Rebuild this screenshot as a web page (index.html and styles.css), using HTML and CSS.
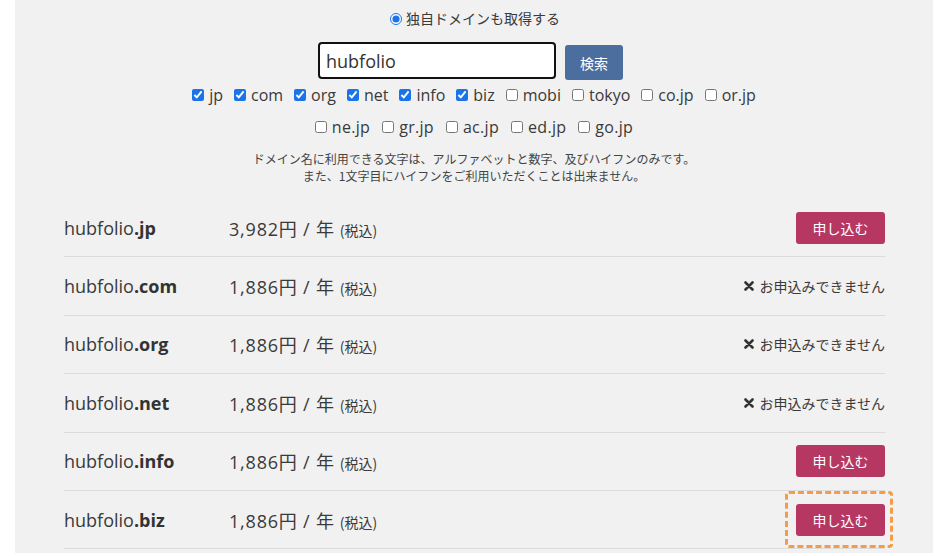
FILE: index.html
```html
<!DOCTYPE html>
<html lang="ja">
<head>
<meta charset="utf-8">
<title>ドメイン検索</title>
<link rel="stylesheet" href="styles.css">
</head>
<body>
<div class="panel">
  <div class="opt">
    <label class="radio-label"><input type="radio" checked>独自ドメインも取得する</label>
  </div>
  <form class="search">
    <input class="query" type="text" value="hubfolio">
    <button type="button" class="search-btn">検索</button>
  </form>
  <div class="tlds">
    <label><input type="checkbox" checked>jp</label>
    <label><input type="checkbox" checked>com</label>
    <label><input type="checkbox" checked>org</label>
    <label><input type="checkbox" checked>net</label>
    <label><input type="checkbox" checked>info</label>
    <label><input type="checkbox" checked>biz</label>
    <label><input type="checkbox">mobi</label>
    <label><input type="checkbox">tokyo</label>
    <label><input type="checkbox">co.jp</label>
    <label><input type="checkbox">or.jp</label>
  </div>
  <div class="tlds tlds2">
    <label><input type="checkbox">ne.jp</label>
    <label><input type="checkbox">gr.jp</label>
    <label><input type="checkbox">ac.jp</label>
    <label><input type="checkbox">ed.jp</label>
    <label><input type="checkbox">go.jp</label>
  </div>
  <p class="note">ドメイン名に利用できる文字は、アルファベットと数字、及びハイフンのみです。<br>また、1文字目にハイフンをご利用いただくことは出来ません。</p>
  <div class="results">
    <div class="row">
      <div class="domain">hubfolio<b>.jp</b></div>
      <div class="price">3,982円 / 年<small>(税込)</small></div>
      <div class="action"><button type="button" class="apply">申し込む</button></div>
    </div>
    <div class="row">
      <div class="domain">hubfolio<b>.com</b></div>
      <div class="price">1,886円 / 年<small>(税込)</small></div>
      <div class="action"><span class="na"><svg class="x" viewBox="0 0 10 10" width="10" height="10"><path d="M1.5 1.5 L8.5 8.5 M8.5 1.5 L1.5 8.5" stroke="#333" stroke-width="2.6" stroke-linecap="round"/></svg>お申込みできません</span></div>
    </div>
    <div class="row">
      <div class="domain">hubfolio<b>.org</b></div>
      <div class="price">1,886円 / 年<small>(税込)</small></div>
      <div class="action"><span class="na"><svg class="x" viewBox="0 0 10 10" width="10" height="10"><path d="M1.5 1.5 L8.5 8.5 M8.5 1.5 L1.5 8.5" stroke="#333" stroke-width="2.6" stroke-linecap="round"/></svg>お申込みできません</span></div>
    </div>
    <div class="row">
      <div class="domain">hubfolio<b>.net</b></div>
      <div class="price">1,886円 / 年<small>(税込)</small></div>
      <div class="action"><span class="na"><svg class="x" viewBox="0 0 10 10" width="10" height="10"><path d="M1.5 1.5 L8.5 8.5 M8.5 1.5 L1.5 8.5" stroke="#333" stroke-width="2.6" stroke-linecap="round"/></svg>お申込みできません</span></div>
    </div>
    <div class="row">
      <div class="domain">hubfolio<b>.info</b></div>
      <div class="price">1,886円 / 年<small>(税込)</small></div>
      <div class="action"><button type="button" class="apply">申し込む</button></div>
    </div>
    <div class="row">
      <div class="domain">hubfolio<b>.biz</b></div>
      <div class="price">1,886円 / 年<small>(税込)</small></div>
      <div class="action"><span class="highlight"><button type="button" class="apply">申し込む</button></span></div>
    </div>
  </div>
</div>
</body>
</html>
```
FILE: styles.css
```css
html, body {
  margin: 0;
  padding: 0;
  background: #ffffff;
}
body {
  font-family: "Open Sans", "Noto Sans CJK JP", sans-serif;
  color: #3a3a3a;
}
.panel {
  margin-left: 15px;
  width: 918px;
  height: 553px;
  background: #f1f1f1;
  overflow: hidden;
}
.opt {
  display: flex;
  justify-content: center;
  padding-top: 10px;
  height: 18px;
  font-size: 14px;
  line-height: 18px;
}
.radio-label {
  display: inline-flex;
  align-items: center;
  gap: 4px;
  margin-left: 2px;
}
.radio-label input {
  width: 12px;
  height: 12px;
  margin: 0;
  accent-color: #1a73e8;
}
.search {
  display: flex;
  justify-content: center;
  align-items: flex-start;
  gap: 9px;
  margin: 14px 0 0;
  padding-right: 7px;
  height: 38px;
}
.query {
  box-sizing: border-box;
  width: 238px;
  height: 37px;
  border: 2px solid #111;
  border-radius: 4px;
  padding: 0 6px;
  font-family: "Open Sans", "Noto Sans CJK JP", sans-serif;
  font-size: 18px;
  color: #333;
  background: #fff;
  outline: none;
}
.search-btn {
  margin-top: 3px;
  width: 58px;
  height: 35px;
  border: none;
  border-radius: 3px;
  background: #4b6e9f;
  color: #fff;
  font-family: "Noto Sans CJK JP", sans-serif;
  font-size: 14px;
  padding: 0;
}
.tlds {
  display: flex;
  justify-content: center;
  gap: 11px;
  margin-top: 4px;
  height: 22px;
  font-size: 16px;
  line-height: 22px;
}
.tlds2 {
  margin-top: 10px;
  gap: 12px;
  letter-spacing: 0.3px;
}
.tlds label {
  display: inline-flex;
  align-items: center;
  gap: 5px;
}
.tlds input {
  width: 12px;
  height: 12px;
  margin: 0;
  accent-color: #1a73e8;
}
.note {
  margin: 12px 0 0;
  text-align: center;
  font-family: "Noto Sans CJK JP", sans-serif;
  font-size: 12px;
  line-height: 17px;
  color: #444;
}
.results {
  margin: 15px 48px 0 49px;
}
.row {
  display: grid;
  grid-template-columns: 165px 1fr auto;
  align-items: center;
  height: 57.4px;
  border-bottom: 1px solid #dcdcdc;
}
.domain {
  font-size: 18px;
  color: #3a3a3a;
}
.domain b {
  font-weight: 700;
  color: #333;
}
.price {
  font-size: 18px;
  letter-spacing: 0.8px;
  color: #3a3a3a;
}
.price small {
  font-family: "Noto Sans CJK JP", sans-serif;
  font-size: 14px;
  margin-left: 5px;
  letter-spacing: 0;
}
.action {
  display: flex;
  justify-content: flex-end;
}
.apply {
  width: 89px;
  height: 32px;
  border: none;
  border-radius: 3px;
  background: #b63762;
  color: #fff;
  font-family: "Noto Sans CJK JP", sans-serif;
  font-size: 14px;
  padding: 0;
}
.na {
  display: inline-flex;
  align-items: center;
  gap: 5px;
  font-family: "Noto Sans CJK JP", sans-serif;
  font-size: 14px;
  color: #3a3a3a;
}
.highlight {
  position: relative;
  display: inline-flex;
}
.highlight::after {
  content: "";
  position: absolute;
  top: -13px;
  left: -11px;
  right: -8px;
  bottom: -12px;
  border: 3px dashed #f49c48;
  border-radius: 4px;
  pointer-events: none;
}
```
